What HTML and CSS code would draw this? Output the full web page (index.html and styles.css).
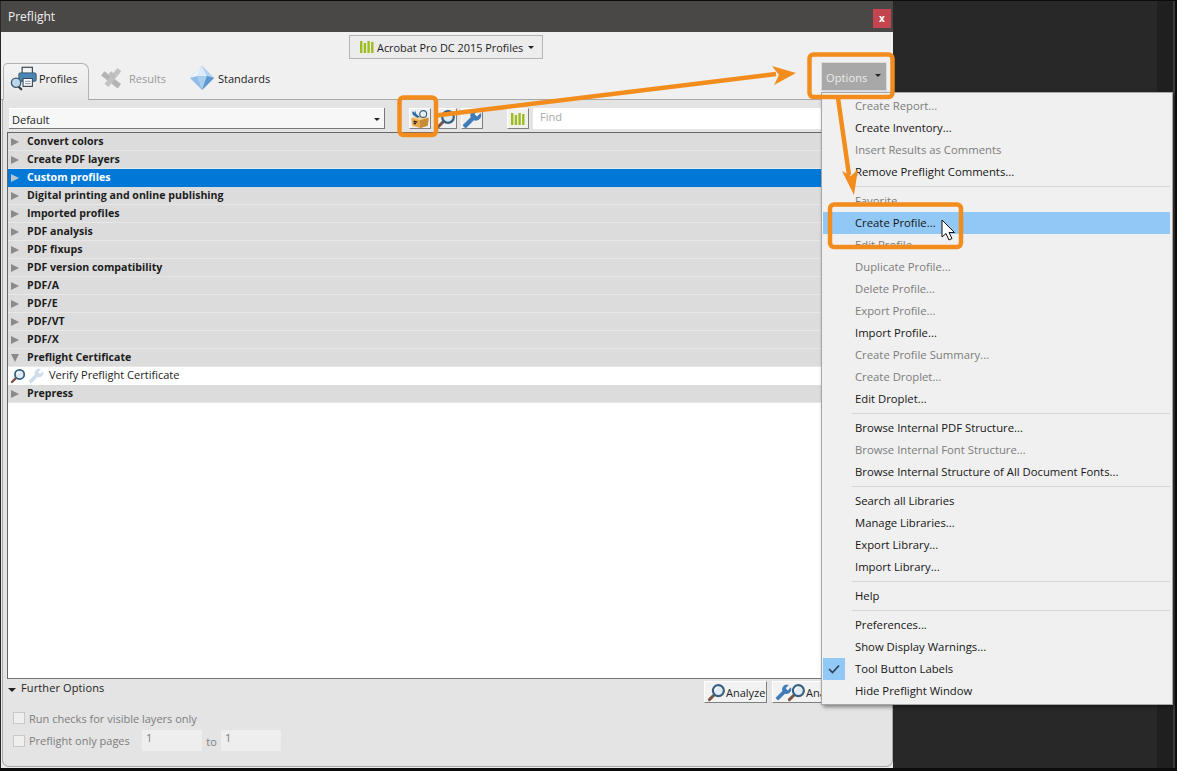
FILE: index.html
```html
<!DOCTYPE html>
<html lang="en">
<head>
<meta charset="utf-8">
<title>Preflight</title>
<link rel="stylesheet" href="styles.css">
</head>
<body>
<svg class="defs" aria-hidden="true">
  <defs>
    <symbol id="bars" viewBox="0 0 14 14">
      <rect x="0" y="1" width="2.4" height="12" fill="#9dbd1f"/>
      <rect x="3.7" y="3" width="2.4" height="10" fill="#9dbd1f"/>
      <rect x="7.4" y="1" width="2.4" height="12" fill="#9dbd1f"/>
      <rect x="11.1" y="2" width="2.4" height="11" fill="#9dbd1f"/>
    </symbol>
    <symbol id="mag" viewBox="0 0 20 20">
      <path d="M8 12 2.5 17.5" stroke="#7b5240" stroke-width="3" stroke-linecap="round" fill="none"/>
      <circle cx="12" cy="8" r="5.8" fill="#dfeaf4" stroke="#35607f" stroke-width="2.2"/>
      <path d="M8.5 7.5a3.8 3.8 0 0 1 3.5-3.2" stroke="#fff" stroke-width="1.4" fill="none"/>
    </symbol>
    <symbol id="wrench" viewBox="0 0 24 24">
      <path transform="translate(24 0) scale(-1 1)" fill="#3f7cb8" d="M22.7 19l-9.1-9.1c.9-2.3.4-5-1.5-6.9-2-2-5-2.4-7.4-1.3L9 6 6 9 1.6 4.7C.4 7.1.9 10.1 2.9 12.1c1.9 1.9 4.6 2.4 6.9 1.5l9.1 9.1c.4.4 1 .4 1.4 0l2.3-2.3c.5-.4.5-1.1.1-1.4z"/>
    </symbol>
    <symbol id="toolbox" viewBox="0 0 22 22">
      <path d="M1.5 10 11 8l9.5 2-1 8.5L11 21l-8.500-2.500z" fill="#e9a94f"/>
      <path d="M1.500 10 11 12.500 20.500 10 11 8z" fill="#f6cf8c"/>
      <path d="M11 12.500V21l8.500-2.500 1-8.500z" fill="#c98a35"/>
      <path d="M4 13.500l4 1M4 15.500l2.500.7" stroke="#2b2118" stroke-width="1.500"/>
      <path d="M3 2.500a3.500 3.500 0 0 0 1.500 5l4 2.500 2-1.500-4-3.500a3.500 3.500 0 0 0-1-3l-.5 2z" fill="#2f6ea8"/>
      <circle cx="14.500" cy="5.500" r="3.800" fill="#e6eff7" stroke="#3c6484" stroke-width="1.300"/>
    </symbol>
    <symbol id="printer" viewBox="0 0 30 26">
      <rect x="13" y="1" width="11" height="7" fill="#f4f4f4" stroke="#3d4c58" stroke-width="1.300"/>
      <rect x="9.500" y="7" width="18.500" height="9" rx="1.500" fill="#4c85b5" stroke="#2f5673"/>
      <path d="M14 13h10v8.500h-10z" fill="#fff" stroke="#3d4c58" stroke-width="1.200"/>
      <path d="M16 16h6M16 18.500h6" stroke="#7c8b96"/>
      <path d="M8 20.500 12 24.500" stroke="#3a3a3a" stroke-width="2.400" stroke-linecap="round"/>
      <circle cx="6.500" cy="17.500" r="5" fill="#b9d6ec" stroke="#3f5568" stroke-width="1.400"/>
    </symbol>
    <symbol id="results" viewBox="0 0 26 24">
      <path d="M3 7 21 21" stroke="#b4b4b4" stroke-width="6" fill="none"/>
      <path d="M7 20 21 3" stroke="#c2c2c2" stroke-width="5.500" fill="none"/>
      <path d="M11 6 15 11" stroke="#bcbcbc" stroke-width="4" fill="none"/>
    </symbol>
    <symbol id="diamond" viewBox="0 0 24 24">
      <path d="M12 0 24 12 12 24 0 12z" fill="#8fbde8"/>
      <path d="M12 0 17 10H7z" fill="#dcecf9"/>
      <path d="M12 0 24 12 17 10z" fill="#b6d4f0"/>
      <path d="M12 0 0 12 7 10z" fill="#eef6fc"/>
      <path d="M7 10h10L12 24z" fill="#a9cdec"/>
      <path d="M17 10 24 12 12 24z" fill="#5e97cf"/>
    </symbol>
  </defs>
</svg>

<div class="stage">
  <section class="dialog">
    <header class="titlebar">
      <span class="title">Preflight</span>
      <button class="close">x</button>
    </header>

    <div class="top-panel">
      <div class="profile-switch-row">
        <button class="profile-switch">
          <svg class="ic-bars"><use href="#bars"/></svg>
          <span>Acrobat Pro DC 2015 Profiles</span>
          <i class="caret"></i>
        </button>
      </div>
      <div class="tab-row">
        <nav class="tabs">
          <div class="tab tab-active"><svg class="ic-printer"><use href="#printer"/></svg><span>Profiles</span></div>
          <div class="tab tab-disabled"><svg class="ic-results"><use href="#results"/></svg><span>Results</span></div>
          <div class="tab"><svg class="ic-diamond"><use href="#diamond"/></svg><span>Standards</span></div>
        </nav>
        <button class="options"><span>Options</span><i class="caret"></i></button>
      </div>
    </div>

    <div class="lower-panel">
      <div class="toolbar">
        <div class="select"><span>Default</span><i class="caret"></i></div>
        <div class="tool-group">
          <button class="tool"><svg class="ic-tool"><use href="#toolbox"/></svg></button>
          <button class="tool"><svg class="ic-tool"><use href="#mag"/></svg></button>
          <button class="tool"><svg class="ic-tool"><use href="#wrench"/></svg></button>
        </div>
        <button class="tool tool-green"><svg class="ic-bars"><use href="#bars"/></svg></button>
        <div class="find">Find</div>
      </div>

      <div class="list">
        <div class="row"><i class="tri"></i><span>Convert colors</span></div>
        <div class="row"><i class="tri"></i><span>Create PDF layers</span></div>
        <div class="row row-selected"><i class="tri"></i><span>Custom profiles</span></div>
        <div class="row"><i class="tri"></i><span>Digital printing and online publishing</span></div>
        <div class="row"><i class="tri"></i><span>Imported profiles</span></div>
        <div class="row"><i class="tri"></i><span>PDF analysis</span></div>
        <div class="row"><i class="tri"></i><span>PDF fixups</span></div>
        <div class="row"><i class="tri"></i><span>PDF version compatibility</span></div>
        <div class="row"><i class="tri"></i><span>PDF/A</span></div>
        <div class="row"><i class="tri"></i><span>PDF/E</span></div>
        <div class="row"><i class="tri"></i><span>PDF/VT</span></div>
        <div class="row"><i class="tri"></i><span>PDF/X</span></div>
        <div class="row"><i class="tri tri-open"></i><span>Preflight Certificate</span></div>
        <div class="leaf">
          <svg class="ic-leaf"><use href="#mag"/></svg>
          <svg class="ic-leaf ic-faded"><use href="#wrench"/></svg>
          <span>Verify Preflight Certificate</span>
        </div>
        <div class="row"><i class="tri"></i><span>Prepress</span></div>
      </div>

      <footer class="footer">
        <div class="footer-head">
          <i class="caret caret-further"></i>
          <span class="further">Further Options</span>
          <button class="analyze"><svg class="ic-analyze"><use href="#mag"/></svg><span>Analyze</span></button>
          <button class="analyze analyze-fix"><svg class="ic-wrench-small"><use href="#wrench"/></svg><svg class="ic-analyze ic-overlap"><use href="#mag"/></svg><span>Analyze and fix</span></button>
        </div>
        <label class="check-row"><i class="box"></i><span>Run checks for visible layers only</span></label>
        <div class="check-row check-pages">
          <i class="box"></i><span class="pages-label">Preflight only pages</span>
          <span class="num">1</span><span class="to">to</span><span class="num">1</span>
        </div>
      </footer>
    </div>
  </section>
  <div class="side-strip"></div>

  <div class="menu">
    <div class="mi off">Create Report...</div>
    <div class="mi">Create Inventory...</div>
    <div class="mi off">Insert Results as Comments</div>
    <div class="mi">Remove Preflight Comments...</div>
    <div class="sep"></div>
    <div class="mi off">Favorite</div>
    <div class="mi hot">Create Profile...</div>
    <div class="mi off">Edit Profile...</div>
    <div class="mi off">Duplicate Profile...</div>
    <div class="mi off">Delete Profile...</div>
    <div class="mi off">Export Profile...</div>
    <div class="mi">Import Profile...</div>
    <div class="mi off">Create Profile Summary...</div>
    <div class="mi off">Create Droplet...</div>
    <div class="mi">Edit Droplet...</div>
    <div class="sep"></div>
    <div class="mi">Browse Internal PDF Structure...</div>
    <div class="mi off">Browse Internal Font Structure...</div>
    <div class="mi">Browse Internal Structure of All Document Fonts...</div>
    <div class="sep"></div>
    <div class="mi">Search all Libraries</div>
    <div class="mi">Manage Libraries...</div>
    <div class="mi">Export Library...</div>
    <div class="mi">Import Library...</div>
    <div class="sep"></div>
    <div class="mi">Help</div>
    <div class="sep"></div>
    <div class="mi">Preferences...</div>
    <div class="mi">Show Display Warnings...</div>
    <div class="mi"><span class="check"><svg class="ic-check" viewBox="0 0 12 10"><path d="M1 5l3.500 3.500L11 1.500" fill="none" stroke="#2c3e50" stroke-width="1.600"/></svg></span>Tool Button Labels</div>
    <div class="mi">Hide Preflight Window</div>
  </div>

  <svg class="annot" viewBox="0 0 1177 771" aria-hidden="true">
    <g fill="none" stroke="#f28c1c" stroke-width="4.500">
      <rect x="399.500" y="97.500" width="36.500" height="37.500" rx="4"/>
      <rect x="809.500" y="54.500" width="83" height="42.500" rx="4"/>
      <rect x="830" y="204.500" width="131" height="42.500" rx="4"/>
    </g>
    <path d="M436 115.500 776 74" stroke="#f28c1c" stroke-width="4.500" fill="none"/>
    <path d="M796 73 772 66 779 75 774 85z" fill="#f28c1c"/>
    <path d="M838 98 849 175" stroke="#f28c1c" stroke-width="4.500" fill="none"/>
    <path d="M854 195 842 171 851 176 858 169z" fill="#f28c1c"/>
    <path transform="translate(942 220)" d="M0 0v17l4-3.500 3 6.500 3-1.500-3-6h5.500z" fill="#fff" stroke="#111" stroke-width="1"/>
  </svg>
</div>
</body>
</html>
```

FILE: styles.css
```css
* { box-sizing: border-box; }
html, body { margin: 0; padding: 0; }
body { font-family: "Open Sans", "Noto Sans", sans-serif; font-size: 11px; color: #1c1c1c; background: #111; }
button { font: inherit; color: inherit; margin: 0; padding: 0; }
i { display: block; font-style: normal; }
.defs { position: absolute; width: 0; height: 0; }

.stage { position: relative; display: flex; width: 1177px; height: 771px; overflow: hidden; background: #282828; border-top: 1px solid #0c0c0c; border-bottom: 3px solid #0c0c0c; }
.side-strip { width: 20px; margin-left: auto; background: #1f1f1f; border-right: 2px solid #0e0e0e; box-shadow: inset -2px 0 0 #3a3a3a; }

.dialog { display: flex; flex-direction: column; width: 892px; height: 767px; margin-left: 1px; background: #ececec; }
.titlebar { display: flex; align-items: center; justify-content: space-between; height: 31px; padding: 0 2px 0 7px; background: #4a4846; color: #f0f0f0; font-size: 12px; }
.close { width: 18px; height: 19px; margin-top: 3px; border: 0; background: #c4444f; color: #fff; font-size: 10px; font-weight: 700; line-height: 17px; }

.top-panel { background: #f0f0f0; }
.profile-switch-row { display: flex; justify-content: center; padding: 3px 0 3px; }
.profile-switch { display: flex; align-items: center; width: 194px; height: 24px; margin-left: -2px; padding-left: 10px; border: 1px solid #b4b4b4; background: #ececec; font-size: 10.900px; white-space: nowrap; }
.profile-switch span { margin-left: 3px; }
.profile-switch .caret { margin-left: 5px; }
.ic-bars { width: 14px; height: 14px; flex: none; }
.caret { width: 0; height: 0; border-left: 3px solid transparent; border-right: 3px solid transparent; border-top: 3px solid #222; }

.tab-row { display: flex; align-items: flex-start; justify-content: space-between; height: 38px; padding: 0 6px 0 2px; border-bottom: 1px solid #a9a9a9; }
.tabs { display: flex; align-self: flex-end; margin-bottom: -1px; height: 37px; }
.tab { display: flex; align-items: center; height: 37px; padding-bottom: 7px; }
.tab-active { width: 86px; padding-left: 6px; background: linear-gradient(#f4f4f4, #e6e6e6); border: 1px solid #b2b2b2; border-bottom: 0; border-radius: 5px 7px 0 0; }
.tab-active span { margin-left: 1px; }
.tab-disabled { margin-left: 11px; color: #9a9a9a; width: 90px; }
.tab-disabled span { margin-left: 5px; }
.ic-printer { width: 28px; height: 25px; }
.ic-results { width: 24px; height: 24px; }
.ic-diamond { width: 24px; height: 24px; }
.tab:last-child span { margin-left: 4px; }
.options { display: flex; align-items: center; justify-content: space-between; width: 66px; height: 29px; padding: 2px 5px 0 4px; border: 1px solid #dcdcdc; background: #a8a8a8; color: #ececec; letter-spacing: .01em; }
.options .caret { margin-top: -4px; }

.lower-panel { display: flex; flex: 1; flex-direction: column; min-height: 0; margin: 0 0 1px 1px; background: #e4e4e4; border-left: 1px solid #a9a9a9; border-right: 1px solid #a9a9a9; border-bottom: 1px solid #a9a9a9; border-radius: 0 0 7px 7px; }

.toolbar { display: flex; align-items: stretch; height: 32px; padding: 8px 0 3px 6px; }
.select { display: flex; align-items: center; justify-content: space-between; width: 376px; padding: 2px 4px 0 3px; background: #f7f7f7; border-right: 1px solid #777; border-bottom: 1px solid #777; box-shadow: inset 0 1px 0 #fff; }
.tool-group { display: flex; gap: 4px; margin-left: 24px; }
.tool { display: flex; align-items: center; justify-content: center; width: 22px; background: #efefef; border: 1px solid #fff; border-right-color: #7f7f7f; border-bottom-color: #7f7f7f; }
.tool-green { margin-left: 24px; background: #f1f1f1; }
.ic-tool { width: 20px; height: 20px; }
.find { flex: 1; margin: 0 5px 0 4px; padding: 0 7px; background: #fff; color: #a8a8a8; line-height: 18px; }

.list { flex: 1; min-height: 0; margin: 0 4px; background: #fff; border: 1px solid #666; border-bottom-color: #777; }
.row { display: flex; align-items: center; height: 18px; padding-left: 3px; background: #dcdcdc; border-bottom: 1px solid #e8e8e8; font-weight: 700; font-size: 10.600px; }
.row span { margin-left: 8px; position: relative; top: -1px; }
.tri { width: 0; height: 0; border-top: 4.500px solid transparent; border-bottom: 4.500px solid transparent; border-left: 8px solid #8a8a8a; }
.tri-open { width: 0; border-left: 4.500px solid transparent; border-right: 4.500px solid transparent; border-top: 8px solid #8a8a8a; border-bottom: 0; }
.row-selected { background: #0078d7; color: #fff; border-bottom-color: #0078d7; }
.row-selected .tri { border-left-color: #b8c4ce; }
.leaf { display: flex; align-items: center; height: 18px; padding-left: 2px; background: #fff; }
.leaf span { margin-left: 3px; position: relative; top: -2px; }
.ic-leaf { width: 16px; height: 16px; margin-right: 2px; }
.ic-faded { opacity: .25; }

.footer { padding: 0 0 15px 6px; color: #222; }
.footer-head { display: flex; align-items: flex-start; height: 24px; padding-right: 5px; }
.caret-further { margin-top: 9px; border-left-width: 4px; border-right-width: 4px; border-top-width: 4px; margin-right: 5px; margin-left: -1px; }
.further { margin-top: 1px; margin-right: auto; letter-spacing: .01em; line-height: 15px; }
.analyze { display: flex; align-items: center; width: 63px; height: 22px; margin: 2px 0 0 5px; padding-left: 2px; background: #f2f2f2; border: 1px solid #fff; border-right-color: #7f7f7f; border-bottom-color: #7f7f7f; white-space: nowrap; }
.analyze-fix { width: 115px; }
.ic-analyze { width: 19px; height: 19px; flex: none; }
.ic-wrench-small { width: 17px; height: 17px; flex: none; }
.ic-overlap { margin-left: -5px; }
.check-row { display: flex; align-items: center; margin-top: 4px; height: 22px; padding-left: 4px; color: #7d7d7d; }
.check-pages { margin-top: 1px; height: 21px; }
.box { width: 12px; height: 12px; margin-right: 4px; background: #efefef; border: 1px solid #c8c8c8; }
.pages-label { width: 113px; }
.num { width: 60px; height: 21px; padding: 0 4px; background: #eeeeee; line-height: 15px; }
.to { width: 19px; text-align: center; position: relative; top: 1px; }

.menu { position: absolute; left: 821px; top: 91px; width: 352px; padding: 2px 2px 2px 1px; background: #f0f0f0; border: 1px solid #a6a6a6; box-shadow: 2px 2px 4px rgba(0,0,0,.45); font-size: 11.300px; color: #161616; }
.mi { position: relative; height: 22px; padding-left: 32px; line-height: 21px; white-space: nowrap; }
.off { color: #7c7c7c; }
.hot { background: #91c8f6; }
.sep { height: 7px; margin-left: 29px; padding-top: 3px; }
.sep::before { content: ""; display: block; height: 1px; background: #d6d6d6; }
.check { position: absolute; left: 0; top: 0; display: flex; align-items: center; justify-content: center; width: 22px; height: 22px; background: #91c8f6; }
.ic-check { width: 12px; height: 10px; }

.annot { position: absolute; left: 0; top: -1px; width: 1177px; height: 771px; pointer-events: none; }
```
